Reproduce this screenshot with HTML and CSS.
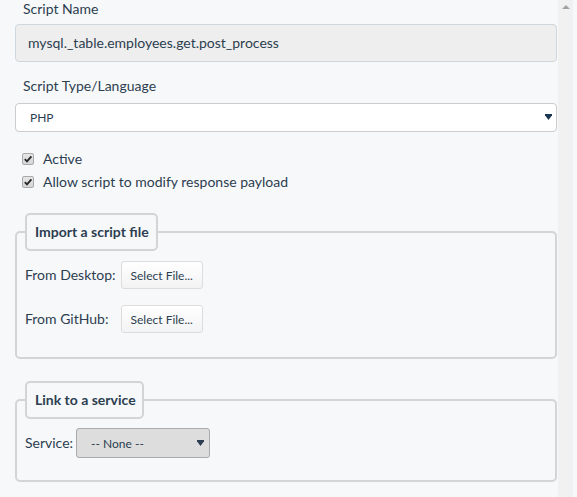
FILE: index.html
```html
<!DOCTYPE html>
<html>
<head>
<meta charset="utf-8">
<link rel="stylesheet" href="styles.css">
</head>
<body>
<div class="page">
  <main class="form">
    <label class="field-label label-name">Script Name</label>
    <div class="text-input">mysql._table.employees.get.post_process</div>

    <label class="field-label label-type">Script Type/Language</label>
    <div class="select-wrap">
      <select class="select"><option>PHP</option></select>
      <svg class="select-arrow" width="7" height="6" viewBox="0 0 7 6"><path d="M0 0H7V1.2L3.5 6L0 1.2Z" fill="#1b3652"/></svg>
    </div>

    <div class="checks">
      <div class="check-row">
        <span class="box"><svg width="10" height="10" viewBox="0 0 10 10"><path d="M1.8 5.2L4 7.4L8.4 2.4" fill="none" stroke="#2a2a2a" stroke-width="1.9"/></svg></span>
        <span>Active</span>
      </div>
      <div class="check-row">
        <span class="box"><svg width="10" height="10" viewBox="0 0 10 10"><path d="M1.8 5.2L4 7.4L8.4 2.4" fill="none" stroke="#2a2a2a" stroke-width="1.9"/></svg></span>
        <span>Allow script to modify response payload</span>
      </div>
    </div>

    <fieldset class="group group-import">
      <legend class="group-title">Import a script file</legend>
      <div class="file-rows">
        <span class="row-label">From Desktop:</span>
        <button class="btn">Select File...</button>
        <span class="row-label">From GitHub:</span>
        <button class="btn">Select File...</button>
      </div>
    </fieldset>

    <fieldset class="group group-service">
      <legend class="group-title">Link to a service</legend>
      <div class="service-row">
        <span class="row-label">Service:</span>
        <div class="select-wrap small">
          <select class="select select-grey"><option>-- None --</option></select>
          <svg class="select-arrow small-arrow" width="7" height="6" viewBox="0 0 7 6"><path d="M0 0H7V1.2L3.5 6L0 1.2Z" fill="#2c3e50"/></svg>
        </div>
      </div>
    </fieldset>
  </main>
  <div class="scrollbar"><span class="scroll-up"></span></div>
</div>
</body>
</html>
```

FILE: styles.css
```css
html, body {
  margin: 0;
  height: 100%;
}
body {
  background: #f7f8fa;
  font-family: Lato, "Noto Sans", sans-serif;
  color: #2c3e50;
  overflow: hidden;
}
.page {
  display: flex;
  height: 497px;
}
.form {
  width: 558px;
  flex: none;
  box-sizing: border-box;
  padding: 0 1px 0 15px;
}
.scrollbar {
  width: 15px;
  flex: none;
  background: #f1f1f1;
  display: flex;
  justify-content: center;
  align-items: flex-start;
  padding-top: 5px;
  box-sizing: border-box;
}
.scroll-up {
  width: 0;
  height: 0;
  border-left: 4px solid transparent;
  border-right: 4px solid transparent;
  border-bottom: 4px solid #a3a3a3;
}
.field-label {
  display: block;
  font-size: 14px;
  line-height: 18px;
  padding-left: 8px;
}
.label-name {
  margin-bottom: 6px;
}
.text-input {
  height: 38px;
  box-sizing: border-box;
  border: 1px solid #cfd7de;
  border-radius: 4px;
  background: #eeeeee;
  padding: 0 12px;
  font-size: 14px;
  line-height: 36px;
}
.label-type {
  margin: 15px 0 8px;
}
.select-wrap {
  position: relative;
}
.select {
  appearance: none;
  -webkit-appearance: none;
  display: block;
  width: 100%;
  height: 29px;
  box-sizing: border-box;
  border: 1px solid #cccccc;
  border-radius: 4px;
  background: #ffffff;
  font-family: Lato, "Noto Sans", sans-serif;
  font-size: 12px;
  color: #2c3e50;
  padding: 0 14px;
  margin: 0;
}
.select-arrow {
  position: absolute;
  right: 5px;
  top: 11px;
  pointer-events: none;
}
.checks {
  margin-top: 18px;
  display: flex;
  flex-direction: column;
  gap: 5px;
  padding-left: 7px;
}
.check-row {
  display: flex;
  align-items: center;
  gap: 9px;
  font-size: 14px;
  line-height: 18px;
}
.box {
  width: 12px;
  height: 12px;
  box-sizing: border-box;
  border: 1px solid #a9a9a9;
  border-radius: 2px;
  background: linear-gradient(#e6e6e6, #d6d6d6);
  display: flex;
  align-items: center;
  justify-content: center;
}
.group {
  margin: 22px 0 0;
  border: 2px solid #d4d4d4;
  border-radius: 5px;
  padding: 10px 8px 24px;
  min-width: 0;
}
.group-title {
  padding: 0 7px 0 8px;
  border: 2px solid #d4d4d4;
  border-radius: 5px;
  font-weight: 700;
  font-size: 14px;
  line-height: 34px;
  background: #f7f8fa;
}
.group-service .group-title {
  padding-right: 6px;
}
.group-service {
  padding-top: 9px;
  padding-bottom: 22px;
}
.file-rows {
  display: grid;
  grid-template-columns: auto auto;
  justify-content: start;
  align-items: baseline;
  column-gap: 5px;
  row-gap: 16px;
}
.row-label {
  font-size: 14px;
}
.btn {
  height: 28px;
  padding: 0 9px;
  border: 1px solid #dddddd;
  border-radius: 3px;
  background: linear-gradient(#ffffff, #f3f3f3);
  font-family: Lato, "Noto Sans", sans-serif;
  font-size: 12px;
  color: #2c3e50;
  margin: 0;
}
.service-row {
  display: flex;
  align-items: baseline;
  gap: 3px;
}
.select-wrap.small {
  width: 134px;
}
.select-grey {
  height: 30px;
  background: #dddddd;
  border-color: #aaaaaa;
  border-radius: 3px;
  padding-left: 14px;
}
.small-arrow {
  right: 6px;
  top: 12px;
}
```
